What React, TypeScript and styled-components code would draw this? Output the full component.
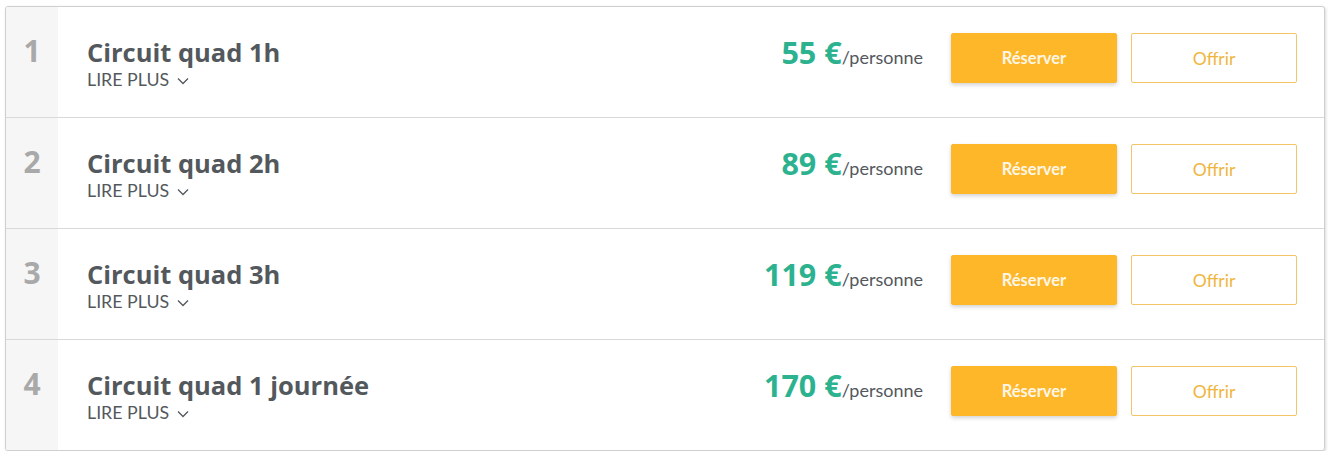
import React from "react";
import styled, { createGlobalStyle } from "styled-components";

const Global = createGlobalStyle`
  html, body { margin: 0; padding: 0; background: #ffffff; }
  body { font-family: Lato, "Open Sans", sans-serif; }
`;

const Page = styled.div`
  padding: 6px 5px 0 5px;
`;

const Table = styled.div`
  width: 1318px;
  border: 1px solid #cfcfcf;
  border-radius: 3px;
  box-shadow: 1px 1px 3px rgba(0, 0, 0, 0.15);
  background: #fff;
  overflow: hidden;
`;

const Row = styled.div<{ $last?: boolean }>`
  display: grid;
  grid-template-columns: 52px 1fr auto;
  align-items: stretch;
  height: 110px;
  border-bottom: ${(p) => (p.$last ? "none" : "1px solid #d9d9d9")};
`;

const Num = styled.div`
  background: #f6f6f6;
  text-align: center;
  padding-top: 26px;
  font-family: "Open Sans", sans-serif;
  font-weight: 700;
  font-size: 30px;
  line-height: 36px;
  color: #a9a9a9;
`;

const Info = styled.div`
  display: flex;
  flex-direction: column;
  padding-left: 29px;
  padding-top: 30px;
`;

const Title = styled.div`
  font-family: "Open Sans", sans-serif;
  font-weight: 700;
  font-size: 25.5px;
  line-height: 30px;
  color: #53585d;
`;

const More = styled.div`
  display: flex;
  align-items: center;
  gap: 8px;
  font-family: Lato, sans-serif;
  font-size: 17.8px;
  line-height: 20px;
  color: #53585d;
  margin-top: 2px;
`;

const Right = styled.div`
  display: flex;
  align-items: flex-start;
  padding-top: 26px;
  padding-right: 27px;
`;

const Price = styled.div`
  line-height: 38px;
  margin-right: 28px;
  white-space: nowrap;
`;

const Amount = styled.span`
  font-family: "Open Sans", sans-serif;
  font-weight: 700;
  font-size: 30.5px;
  color: #2cb28f;
`;

const Per = styled.span`
  font-family: Lato, sans-serif;
  font-size: 18px;
  color: #53585d;
`;

const Button = styled.button<{ $primary?: boolean }>`
  width: 166px;
  height: 50px;
  border-radius: 2px;
  font-family: Lato, sans-serif;
  font-size: ${(p) => (p.$primary ? "16.5px" : "17.5px")};
  font-weight: ${(p) => (p.$primary ? 700 : 400)};
  cursor: pointer;
  border: 1px solid ${(p) => (p.$primary ? "#fdb729" : "#f3c468")};
  background: ${(p) => (p.$primary ? "#fdb729" : "#ffffff")};
  color: ${(p) => (p.$primary ? "#fdf6e6" : "#efb53d")};
  box-shadow: ${(p) => (p.$primary ? "0 2px 4px rgba(0,0,0,0.18)" : "none")};
  margin-left: ${(p) => (p.$primary ? "0" : "14px")};
`;

const Chevron = () => (
  <svg width="12" height="8" viewBox="0 0 12 8" fill="none" style={{ marginTop: 3 }}>
    <path d="M1 1.5l5 5 5-5" stroke="#53585d" strokeWidth="1.3" />
  </svg>
);

const items = [
  { n: 1, title: "Circuit quad 1h", price: "55 €" },
  { n: 2, title: "Circuit quad 2h", price: "89 €" },
  { n: 3, title: "Circuit quad 3h", price: "119 €" },
  { n: 4, title: "Circuit quad 1 journée", price: "170 €" },
];

export default function App() {
  return (
    <Page>
      <Global />
      <Table>
        {items.map((it, i) => (
          <Row key={it.n} $last={i === items.length - 1}>
            <Num>{it.n}</Num>
            <Info>
              <Title>{it.title}</Title>
              <More>
                LIRE PLUS <Chevron />
              </More>
            </Info>
            <Right>
              <Price>
                <Amount>{it.price}</Amount>
                <Per>/personne</Per>
              </Price>
              <Button $primary>Réserver</Button>
              <Button>Offrir</Button>
            </Right>
          </Row>
        ))}
      </Table>
    </Page>
  );
}
